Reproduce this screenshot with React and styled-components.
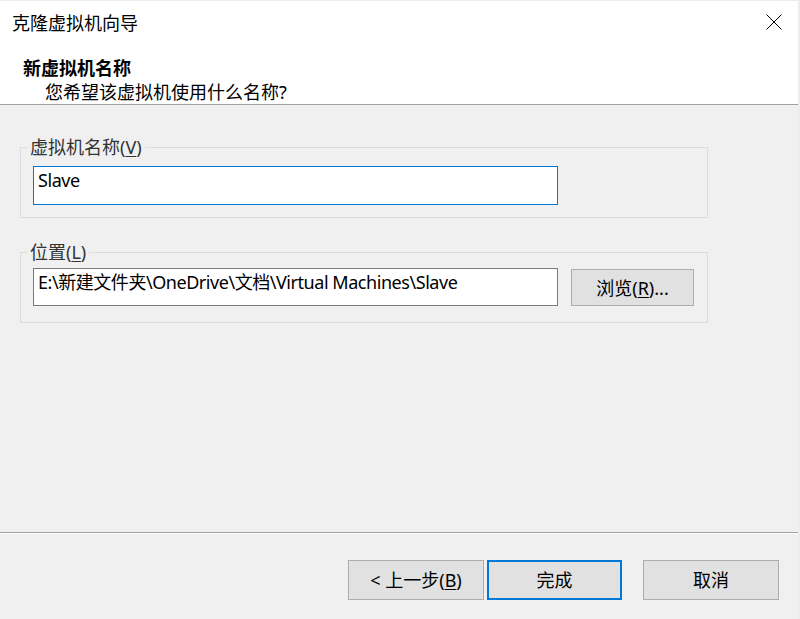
import React from "react";
import styled, { createGlobalStyle } from "styled-components";

const GlobalStyle = createGlobalStyle`
  html, body {
    margin: 0;
    padding: 0;
    background: #ededed;
  }
  body {
    font-family: "Noto Sans", "Noto Sans CJK SC", sans-serif;
    font-size: 18px;
    color: #000;
  }
`;

const Window = styled.div`
  width: 798px;
  height: 618px;
  margin-top: 1px;
  display: flex;
  flex-direction: column;
  background: #f0f0f0;
`;

const Header = styled.div`
  background: #fff;
  height: 103px;
  border-bottom: 1px solid #a0a0a0;
  display: flex;
  flex-direction: column;
`;

const TitleBar = styled.div`
  height: 44px;
  display: flex;
  align-items: center;
  justify-content: space-between;
  padding: 0 16px 0 12px;
`;

const Title = styled.div`
  font-size: 18px;
  line-height: 24px;
`;

const CloseButton = styled.button`
  border: none;
  background: none;
  padding: 0;
  width: 17px;
  height: 17px;
  display: flex;
  align-items: center;
  justify-content: center;
  margin-top: -2px;
`;

const Heading = styled.div`
  margin-top: 11px;
  padding-left: 23px;
  font-weight: 700;
  line-height: 24px;
`;

const SubHeading = styled.div`
  padding-left: 45px;
  line-height: 24px;
`;

const Content = styled.div`
  flex: 1;
  padding-top: 31px;
  display: flex;
  flex-direction: column;
  gap: 23px;
`;

const GroupBox = styled.fieldset`
  width: 688px;
  box-sizing: border-box;
  margin: 0 0 0 20px;
  padding: ${(p) => p.$top}px 12px ${(p) => p.$bottom}px 12px;
  border: 1px solid #dcdcdc;
  min-width: 0;
`;

const Legend = styled.legend`
  margin-left: -6px;
  padding: 0 3px;
  line-height: 22px;
  color: #333;
`;

const Key = styled.span`
  text-decoration: underline;
  text-underline-offset: 2px;
`;

const FieldRow = styled.div`
  display: flex;
  align-items: flex-end;
  gap: 13px;
`;

const TextField = styled.div`
  width: 525px;
  height: ${(p) => p.$height}px;
  box-sizing: border-box;
  background: #fff;
  border: 1px solid ${(p) => (p.$focused ? "#0078d7" : "#7a7a7a")};
  padding: 1px 4px;
  line-height: 24px;
  letter-spacing: -0.45px;
  white-space: nowrap;
  overflow: hidden;
`;

const Button = styled.button`
  width: ${(p) => p.$width}px;
  height: ${(p) => p.$height}px;
  box-sizing: border-box;
  background: #e1e1e1;
  border: ${(p) => (p.$primary ? "2px solid #0078d7" : "1px solid #adadad")};
  font-family: inherit;
  font-size: 18px;
  color: #000;
  padding: 0;
  margin-left: ${(p) => p.$gap || 0}px;
  line-height: 24px;
`;

const Footer = styled.div`
  height: 87px;
  border-top: 1px solid #a0a0a0;
  box-shadow: inset 0 1px 0 #fff;
  box-sizing: border-box;
  padding: 27px 19px 0 0;
  display: flex;
  justify-content: flex-end;
  align-items: flex-start;
`;

const CloseIcon = () => (
  <svg width="16" height="16" viewBox="0 0 16 16">
    <path d="M0.5 0.5 L15.5 15.5 M15.5 0.5 L0.5 15.5" stroke="#000" strokeWidth="1" fill="none" />
  </svg>
);

export default function App() {
  return (
    <>
      <GlobalStyle />
      <Window>
        <Header>
          <TitleBar>
            <Title>克隆虚拟机向导</Title>
            <CloseButton aria-label="关闭">
              <CloseIcon />
            </CloseButton>
          </TitleBar>
          <Heading>新虚拟机名称</Heading>
          <SubHeading>您希望该虚拟机使用什么名称?</SubHeading>
        </Header>
        <Content>
          <GroupBox $top={8} $bottom={12}>
            <Legend>
              虚拟机名称(<Key>V</Key>)
            </Legend>
            <TextField $focused $height={39}>Slave</TextField>
          </GroupBox>
          <GroupBox $top={5} $bottom={16}>
            <Legend>
              位置(<Key>L</Key>)
            </Legend>
            <FieldRow>
              <TextField $height={38}>E:\新建文件夹\OneDrive\文档\Virtual Machines\Slave</TextField>
              <Button $width={123} $height={37}>
                浏览(<Key>R</Key>)...
              </Button>
            </FieldRow>
          </GroupBox>
        </Content>
        <Footer>
          <Button $width={136} $height={40}>
            &lt; 上一步(<Key>B</Key>)
          </Button>
          <Button $primary $width={135} $height={40} $gap={3}>
            完成
          </Button>
          <Button $width={136} $height={40} $gap={21}>
            取消
          </Button>
        </Footer>
      </Window>
    </>
  );
}
